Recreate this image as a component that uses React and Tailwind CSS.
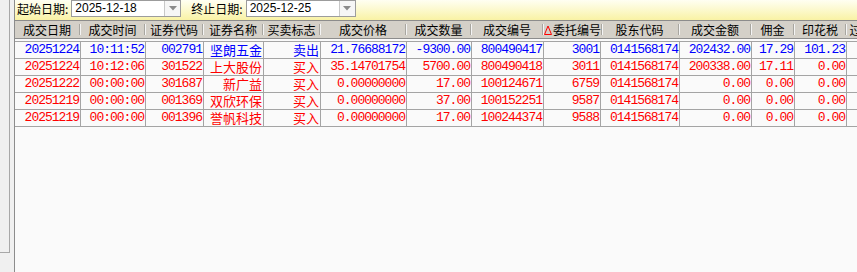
import React from "react";

const cols = [
  { title: "成交日期", w: 66 },
  { title: "成交时间", w: 65 },
  { title: "证券代码", w: 58 },
  { title: "证券名称", w: 60, cjk: true },
  { title: "买卖标志", w: 57, cjk: true },
  { title: "成交价格", w: 86 },
  { title: "成交数量", w: 65 },
  { title: "成交编号", w: 72 },
  { title: "委托编号", w: 57, sorted: true },
  { title: "股东代码", w: 79 },
  { title: "成交金额", w: 72 },
  { title: "佣金", w: 43 },
  { title: "印花税", w: 52 },
  { title: "过户费", w: 43 },
];

const rows = [
  { color: "text-[#0000ff]", cells: ["20251224", "10:11:52", "002791", "坚朗五金", "卖出", "21.76688172", "-9300.00", "800490417", "3001", "0141568174", "202432.00", "17.29", "101.23", "0.00"] },
  { color: "text-[#ff0000]", cells: ["20251224", "10:12:06", "301522", "上大股份", "买入", "35.14701754", "5700.00", "800490418", "3011", "0141568174", "200338.00", "17.11", "0.00", "0.00"] },
  { color: "text-[#ff0000]", cells: ["20251222", "00:00:00", "301687", "新广益", "买入", "0.00000000", "17.00", "100124671", "6759", "0141568174", "0.00", "0.00", "0.00", "0.00"] },
  { color: "text-[#ff0000]", cells: ["20251219", "00:00:00", "001369", "双欣环保", "买入", "0.00000000", "37.00", "100152251", "9587", "0141568174", "0.00", "0.00", "0.00", "0.00"] },
  { color: "text-[#ff0000]", cells: ["20251219", "00:00:00", "001396", "誉帆科技", "买入", "0.00000000", "17.00", "100244374", "9588", "0141568174", "0.00", "0.00", "0.00", "0.00"] },
];

const cjkFont = "font-['Noto_Sans_CJK_SC',sans-serif]";
const monoFont = "font-['Liberation_Mono','Noto_Sans_CJK_SC',monospace]";

function DateBox({ value }) {
  return (
    <div className="flex h-[17px] w-[110px] border border-[#9c9c9c] bg-white">
      <div className="flex-1 pl-[3px] text-[12px] leading-[15px] font-['Liberation_Sans',sans-serif] text-black">
        {value}
      </div>
      {/* dropdown button */}
      <div className="flex w-[16px] items-center justify-center border-l border-[#c8c8c8] bg-[#f6f6f6]">
        <svg width="8" height="5" viewBox="0 0 8 5">
          <polygon points="0 0 8 0 4 4.5" fill="#8a8a8a" />
        </svg>
      </div>
    </div>
  );
}

export default function App() {
  return (
    <div className="flex h-[272px] w-[857px] overflow-hidden bg-[#f0f0f0]">
      {/* left side panel */}
      <div className="w-[14px] shrink-0">
        <div className="h-[253px] w-[10px] border-r border-b border-[#a8a8a8]" />
      </div>

      <div className="flex min-w-0 flex-1 flex-col border-l border-[#8c8c8c] bg-[#fafafa]">
        {/* date filter bar */}
        <div className={`flex h-[20px] shrink-0 items-start bg-gradient-to-b from-[#fffff2] to-[#f9f2a4] text-[12px] text-black ${cjkFont}`}>
          <span className="ml-[2px] mr-[3px] leading-[17px]">起始日期:</span>
          <DateBox value="2025-12-18" />
          <span className="ml-[10px] mr-[3px] leading-[17px]">终止日期:</span>
          <DateBox value="2025-12-25" />
        </div>

        {/* table header */}
        <div className={`flex h-[19px] shrink-0 border-t border-b border-[#8c8c8c] bg-[#d4d0c8] text-[12px] text-black ${cjkFont}`}>
          {cols.map((c, i) => (
            <div key={i} style={{ width: c.w }} className="flex shrink-0 items-center">
              <div className="flex flex-1 items-center justify-center whitespace-nowrap leading-[17px]">
                {c.sorted && (
                  <svg width="8" height="10" viewBox="0 0 8 10" className="mr-[1px]">
                    <polygon points="4 1 7.5 9.5 0.5 9.5" fill="none" stroke="#ff0000" strokeWidth="1" />
                  </svg>
                )}
                {c.title}
              </div>
              <div className="h-[11px] w-[2px] shrink-0 border-l border-[#a8a6a0] border-r border-r-[#f4f4f4]" />
            </div>
          ))}
        </div>

        {/* rows */}
        <div className="mt-[2px]">
          {rows.map((r, ri) => (
            <div key={ri} className={`flex h-[17px] border-t border-[#a4a4a4] ${r.color}`}>
              {r.cells.map((v, ci) => (
                <div
                  key={ci}
                  style={{ width: cols[ci].w }}
                  className={`shrink-0 overflow-hidden whitespace-nowrap border-r border-[#a4a4a4] pr-[1px] text-right leading-[16px] ${
                    cols[ci].cjk ? `${cjkFont} text-[13px]` : `${monoFont} text-[13px] tracking-[-1px]`
                  }`}
                >
                  {v}
                </div>
              ))}
            </div>
          ))}
          <div className="border-t border-[#a4a4a4]" />
        </div>
      </div>
    </div>
  );
}
